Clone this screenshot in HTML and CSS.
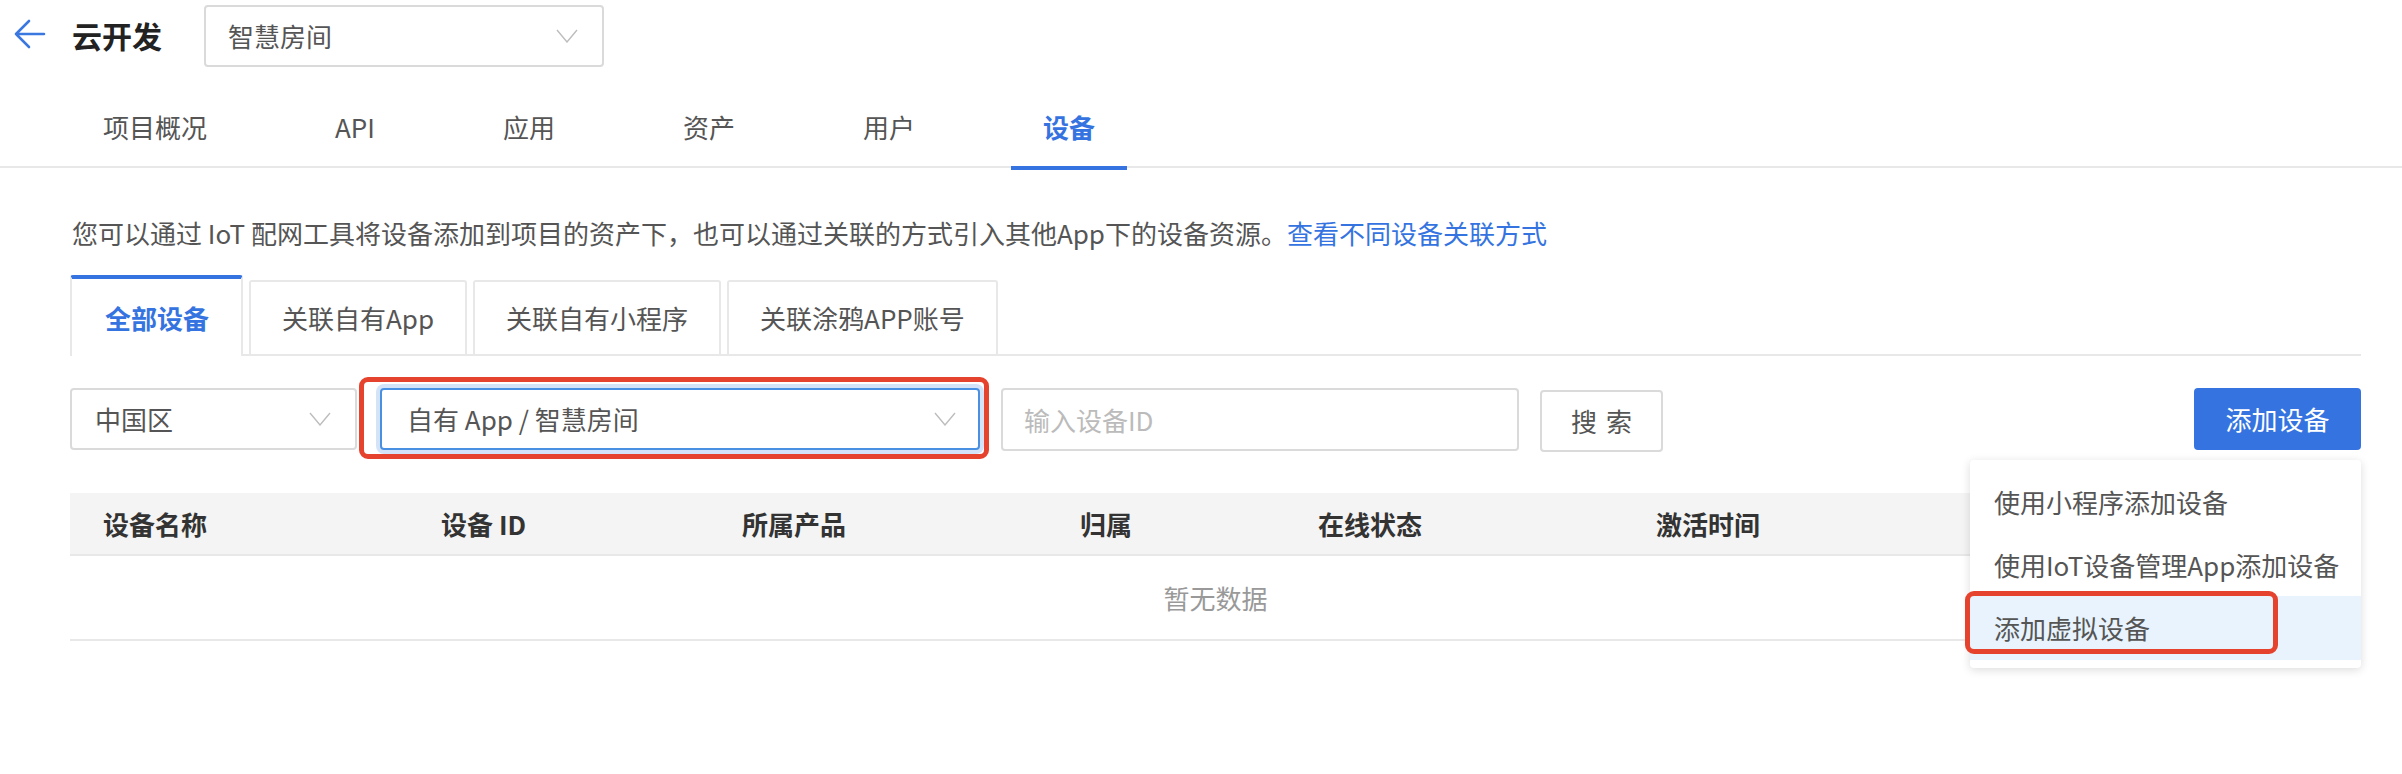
FILE: index.html
```html
<!DOCTYPE html>
<html lang="zh-CN">
<head>
<meta charset="utf-8">
<title>云开发 - 设备</title>
<link rel="stylesheet" href="styles.css">
</head>
<body>
<header class="topbar">
  <svg class="back" width="32" height="30" viewBox="0 0 32 30"><path d="M30 15 H2 M15 2 L2 15 L15 28" fill="none" stroke="#3a78e0" stroke-width="2.6" stroke-linecap="round" stroke-linejoin="round"/></svg>
  <div class="title">云开发</div>
  <div class="select project">
    <span>智慧房间</span>
    <svg class="chev" width="22" height="14" viewBox="0 0 22 14"><path d="M1 1 L11 13 L21 1" fill="none" stroke="#bdbdbd" stroke-width="1.4"/></svg>
  </div>
</header>
<nav class="nav">
  <div class="nav-item">项目概况</div>
  <div class="nav-item">API</div>
  <div class="nav-item">应用</div>
  <div class="nav-item">资产</div>
  <div class="nav-item">用户</div>
  <div class="nav-item active">设备</div>
</nav>
<main class="content">
  <p class="desc">您可以通过 IoT 配网工具将设备添加到项目的资产下，也可以通过关联的方式引入其他App下的设备资源。<a class="link">查看不同设备关联方式</a></p>
  <div class="tabs">
    <div class="tab active">全部设备</div>
    <div class="tab">关联自有App</div>
    <div class="tab">关联自有小程序</div>
    <div class="tab">关联涂鸦APP账号</div>
  </div>
  <div class="filters">
    <div class="select region">
      <span>中国区</span>
      <svg class="chev" width="22" height="14" viewBox="0 0 22 14"><path d="M1 1 L11 13 L21 1" fill="none" stroke="#bdbdbd" stroke-width="1.4"/></svg>
    </div>
    <div class="mark-wrap">
      <div class="select app focused">
        <span>自有 App / 智慧房间</span>
        <svg class="chev" width="22" height="14" viewBox="0 0 22 14"><path d="M1 1 L11 13 L21 1" fill="none" stroke="#bdbdbd" stroke-width="1.4"/></svg>
      </div>
      <div class="mark mark-select"></div>
    </div>
    <div class="input">输入设备ID</div>
    <div class="btn search">搜索</div>
    <div class="add-wrap">
      <div class="btn primary">添加设备</div>
      <div class="menu">
        <div class="menu-item">使用小程序添加设备</div>
        <div class="menu-item">使用IoT设备管理App添加设备</div>
        <div class="menu-item hover">添加虚拟设备<div class="mark mark-item"></div></div>
      </div>
    </div>
  </div>
  <div class="table">
    <div class="thead">
      <div class="th c1">设备名称</div>
      <div class="th c2">设备 ID</div>
      <div class="th c3">所属产品</div>
      <div class="th c4">归属</div>
      <div class="th c5">在线状态</div>
      <div class="th c6">激活时间</div>
    </div>
    <div class="empty">暂无数据</div>
  </div>
</main>
</body>
</html>
```

FILE: styles.css
```css
* { box-sizing: border-box; }
html, body { margin: 0; padding: 0; background: #fff; }
body {
  font-family: "Noto Sans CJK SC", "Noto Sans", sans-serif;
  font-size: 26px;
  color: #555;
  width: 2402px;
  height: 774px;
  overflow: hidden;
}
.topbar {
  display: flex;
  align-items: center;
  height: 72px;
  padding-left: 14px;
}
.back { display: block; margin-top: -4px; }
.title {
  margin-left: 26px;
  font-size: 30px;
  font-weight: 700;
  color: #222;
  line-height: 40px;
  margin-top: -2px;
}
.select {
  display: flex;
  align-items: center;
  justify-content: space-between;
  height: 62px;
  border: 2px solid #dadada;
  border-radius: 4px;
  background: #fff;
  color: #555;
  line-height: 36px;
}
.project {
  margin-left: 42px;
  width: 400px;
  padding: 0 24px 0 22px;
}
.chev { display: block; flex: none; }
.nav {
  display: flex;
  gap: 64px;
  height: 96px;
  padding-left: 71px;
  border-bottom: 2px solid #e8e8e8;
}
.nav-item {
  position: relative;
  padding: 37px 32px 0;
  line-height: 36px;
  color: #555;
}
.nav-item.active { color: #3574e0; font-weight: 700; }
.nav-item.active::after {
  content: "";
  position: absolute;
  left: 0; right: 0;
  bottom: -4px;
  height: 4px;
  background: #3574e0;
}
.content { padding: 0 41px 0 70px; }
.desc {
  margin: 47px 0 0 2px;
  line-height: 36px;
  color: #555;
}
.link { color: #3574e0; }
.tabs {
  display: flex;
  align-items: flex-end;
  gap: 6px;
  margin-top: 26px;
  border-bottom: 2px solid #e8e8e8;
  height: 79px;
}
.tab {
  height: 74px;
  padding: 0 31px;
  border: 2px solid #e8e8e8;
  border-bottom: none;
  border-radius: 3px 3px 0 0;
  display: flex;
  align-items: center;
  line-height: 36px;
  color: #555;
  background: #fff;
}
.tab.active {
  height: 81px;
  margin-bottom: -2px;
  border-top: 4px solid #3574e0;
  color: #3574e0;
  font-weight: 700;
  padding: 0 32px 0 33px;
}
.filters {
  display: flex;
  align-items: center;
  margin-top: 31px;
  height: 64px;
}
.region { width: 287px; padding: 0 24px 0 23px; }
.mark-wrap { position: relative; margin-left: 23px; }
.app {
  width: 600px;
  padding: 0 22px 0 25px;
  border-color: #4a90e2;
  box-shadow: 0 0 0 4px #d5e3f8;
}
.mark {
  position: absolute;
  border: 5px solid #e5432d;
  border-radius: 9px;
  pointer-events: none;
}
.mark-select { left: -21px; top: -11px; right: -9px; bottom: -9px; }
.input {
  margin-left: 21px;
  width: 518px;
  height: 63px;
  border: 2px solid #dadada;
  border-radius: 4px;
  padding: 0 21px;
  line-height: 59px;
  color: #bbb;
}
.btn {
  height: 62px;
  border-radius: 4px;
  display: flex;
  align-items: center;
  justify-content: center;
  line-height: 36px;
}
.search {
  margin-left: 21px;
  margin-top: 3px;
  width: 123px;
  border: 2px solid #dadada;
  letter-spacing: 9px;
  padding-left: 9px;
  color: #555;
}
.add-wrap { position: relative; margin-left: auto; }
.primary {
  width: 167px;
  background: #3574e0;
  color: #fff;
}
.menu {
  position: absolute;
  top: 72px;
  right: 0;
  width: 391px;
  padding: 10px 0 8px;
  background: #fff;
  border-radius: 4px;
  box-shadow: 0 2px 10px rgba(0,0,0,0.14);
  z-index: 5;
}
.menu-item {
  position: relative;
  height: 63px;
  padding-left: 24px;
  display: flex;
  align-items: center;
  line-height: 36px;
  color: #555;
  white-space: nowrap;
}
.menu-item.hover { background: #e8f3fd; height: 64px; }
.mark-item { left: -5px; top: -5px; width: 313px; height: 63px; }
.table { margin-top: 42px; }
.thead {
  display: grid;
  grid-template-columns: 338px 301px 338px 238px 338px 1fr;
  height: 63px;
  background: #f4f4f4;
  border-bottom: 2px solid #e8e8e8;
  align-items: center;
}
.th {
  padding-left: 33px;
  font-weight: 700;
  color: #333;
  line-height: 36px;
}
.empty {
  height: 85px;
  border-bottom: 2px solid #e8e8e8;
  display: flex;
  align-items: center;
  justify-content: center;
  color: #999;
  line-height: 36px;
}
```
